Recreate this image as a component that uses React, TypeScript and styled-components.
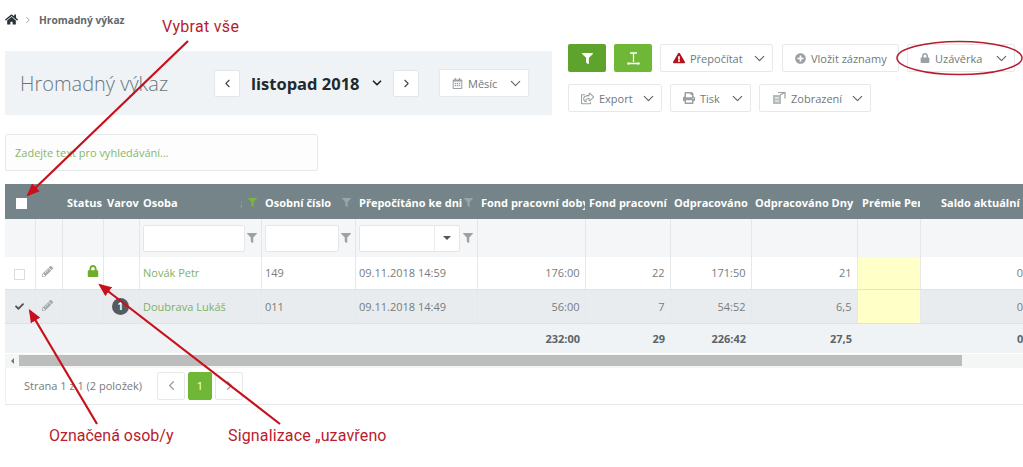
import React from "react";
import styled, { createGlobalStyle } from "styled-components";
import { ChevronDown, ChevronLeft, ChevronRight } from "lucide-react";
import {
  FaCheck,
  FaExclamationTriangle,
  FaFilter,
  FaHome,
  FaLock,
  FaPencilAlt,
  FaPlusCircle,
  FaPrint,
  FaRegCalendarAlt,
  FaRegShareSquare,
} from "react-icons/fa";

const GlobalStyle = createGlobalStyle`
  html, body {
    margin: 0;
    padding: 0;
    background: #fff;
    overflow: hidden;
  }
  body {
    font-family: "Open Sans", "Liberation Sans", sans-serif;
    color: #6b7478;
  }
`;

const Page = styled.div`
  position: relative;
  width: 1023px;
  height: 467px;
  overflow: hidden;
`;

const Top = styled.div`
  display: flex;
  padding-left: 5px;
  height: 184px;
`;

const LeftColumn = styled.div`
  width: 547px;
  margin-right: 16px;
`;

const Breadcrumb = styled.div`
  height: 51px;
  padding-top: 13px;
  box-sizing: border-box;
  display: flex;
  align-items: flex-start;
  font-size: 10.2px;
  line-height: 14px;
  font-weight: 700;
  color: #5f686c;
  svg.home {
    color: #2b3338;
    width: 13px;
    height: 13px;
  }
  svg.sep {
    margin: 2px 6px 0 5px;
    color: #8f979b;
  }
`;

const TitlePanel = styled.div`
  height: 64px;
  background: #eff3f6;
  display: flex;
  align-items: center;
  padding-left: 15px;
`;

const Title = styled.div`
  width: 194px;
  font-size: 20px;
  font-weight: 300;
  color: #69767c;
  white-space: nowrap;
`;

const SquareButton = styled.div`
  width: 26px;
  height: 27px;
  background: #fff;
  border: 1px solid #e3e6e8;
  border-radius: 2px;
  box-sizing: border-box;
  display: flex;
  align-items: center;
  justify-content: center;
  color: #3d4448;
`;

const Period = styled.div`
  width: 153px;
  padding-left: 11px;
  box-sizing: border-box;
  display: flex;
  align-items: center;
  font-size: 16.5px;
  font-weight: 700;
  color: #22292d;
  white-space: nowrap;
  svg {
    margin-left: 10px;
    color: #22292d;
  }
`;

const ToolButton = styled.div<{ $w: number }>`
  width: ${(p) => p.$w}px;
  height: 28px;
  box-sizing: border-box;
  background: #fff;
  border: 1px solid #e6e8ea;
  border-radius: 2px;
  padding: 0 4px 0 12px;
  display: flex;
  align-items: center;
  gap: 5px;
  font-size: 11px;
  color: #70787c;
  white-space: nowrap;
  > svg:first-child {
    color: #9aa0a4;
    flex: none;
  }
  > svg:last-child:not(:first-child) {
    margin-left: auto;
    color: #5c6468;
    flex: none;
  }
`;

const MonthButton = styled(ToolButton)`
  margin-left: 20px;
`;

const WideToolButton = styled(ToolButton)`
  margin-left: 1px;
`;

const WarnIcon = styled(FaExclamationTriangle)`
  &&& {
    color: #b3141c;
  }
`;

const SearchBox = styled.div`
  margin-top: 19px;
  width: 313px;
  height: 37px;
  box-sizing: border-box;
  border: 1px solid #e6e9eb;
  border-radius: 2px;
  padding: 0 9px;
  display: flex;
  align-items: center;
  font-size: 11px;
  color: #86b768;
  background: #fdfdfd;
`;

const RightColumn = styled.div`
  padding-top: 44px;
  display: flex;
  flex-direction: column;
  gap: 12px;
`;

const ButtonRow = styled.div`
  display: flex;
  gap: 8px;
`;

const GreenButton = styled.div<{ $dark?: boolean }>`
  width: 38px;
  height: 28px;
  border-radius: 2px;
  background: ${(p) => (p.$dark ? "#5ea32c" : "#6fb737")};
  display: flex;
  align-items: center;
  justify-content: center;
  color: #fff;
`;

const TableWrap = styled.div`
  margin-left: 5px;
  width: 1018px;
  overflow: hidden;
`;

const Grid = styled.table`
  table-layout: fixed;
  border-collapse: collapse;
  width: 1039px;
  font-size: 11px;
`;

const Col = styled.col<{ $w: number }>`
  width: ${(p) => p.$w}px;
`;

const HeadCell = styled.th<{ $left?: number }>`
  height: 35px;
  padding: 1px 0 0 ${(p) => p.$left ?? 4}px;
  box-sizing: border-box;
  background: #748489;
  color: #fff;
  font-size: 11px;
  font-weight: 700;
  text-align: left;
  white-space: nowrap;
  overflow: hidden;
`;

const HeadInner = styled.div`
  display: flex;
  align-items: center;
  justify-content: space-between;
  padding-right: 4px;
  svg {
    flex: none;
  }
`;

const SortIcons = styled.span`
  display: flex;
  align-items: center;
  gap: 4px;
  color: #9aa5a9;
  font-weight: 400;
`;

const ActiveFilter = styled(FaFilter)`
  color: #7cb342;
`;

const FilterCell = styled.td`
  height: 38px;
  padding: 0 4px 0 3px;
  background: #f4f6f7;
  border-right: 1px solid #e4e7e9;
`;

const FilterInner = styled.div`
  display: flex;
  align-items: center;
  justify-content: space-between;
  color: #9aa3a6;
`;

const FilterInput = styled.div<{ $w: number }>`
  width: ${(p) => p.$w}px;
  height: 27px;
  background: #fff;
  border: 1px solid #e4e7e9;
  border-radius: 2px;
  box-sizing: border-box;
  display: flex;
  justify-content: flex-end;
  align-items: center;
`;

const DropPart = styled.span`
  width: 24px;
  height: 100%;
  border-left: 1px solid #e9ebed;
  display: flex;
  align-items: center;
  justify-content: center;
  &::after {
    content: "";
    border: 4px solid transparent;
    border-top-color: #555;
    border-bottom: 0;
  }
`;

const Row = styled.tr<{ $selected?: boolean }>`
  td {
    background: ${(p) => (p.$selected ? "#e9ecee" : "#fff")};
    border-bottom: 1px solid ${(p) => (p.$selected ? "#e0e3e5" : "#dfe2e4")};
  }
`;

const Cell = styled.td<{ $right?: boolean; $center?: boolean; $h?: number }>`
  height: ${(p) => p.$h ?? 32}px;
  padding: 0 5px 0 3.5px;
  box-sizing: border-box;
  border-right: 1px solid #e6e8ea;
  color: #757d80;
  font-size: 11px;
  white-space: nowrap;
  text-align: ${(p) => (p.$right ? "right" : p.$center ? "center" : "left")};
`;

const NameCell = styled(Cell)`
  color: #7fb163;
`;

const YellowCell = styled(Cell)`
  && {
    background: #ffffc8;
  }
`;

const StatusCell = styled(Cell)`
  padding-right: 4px;
  text-align: right;
`;

const Total = styled.td<{ $right?: boolean }>`
  height: 29px;
  padding: 0 5px 0 4px;
  background: #f0f3f6;
  font-weight: 700;
  color: #5c6468;
  text-align: ${(p) => (p.$right ? "right" : "left")};
`;

const CheckBox = styled.span<{ $header?: boolean }>`
  display: inline-flex;
  width: 11px;
  height: 11px;
  box-sizing: border-box;
  vertical-align: middle;
  background: ${(p) => (p.$header ? "#fff" : "transparent")};
  border: 1px solid ${(p) => (p.$header ? "#fff" : "#dadddf")};
`;

const PlainCheck = styled.span`
  color: #4a5155;
  display: inline-flex;
`;

const Pencil = styled(FaPencilAlt)`
  color: #a4a9ac;
`;

const Badge = styled.span`
  display: inline-flex;
  width: 17px;
  height: 17px;
  border-radius: 50%;
  background: #545c60;
  color: #fff;
  font-size: 10px;
  font-weight: 700;
  align-items: center;
  justify-content: center;
`;

const Scrollbar = styled.div`
  margin: 1px 0 0 5px;
  height: 14px;
  display: flex;
  align-items: center;
  background: #f4f5f5;
`;

const ScrollArrow = styled.span`
  width: 14px;
  display: flex;
  justify-content: center;
  &::after {
    content: "";
    border: 3px solid transparent;
    border-right-color: #777;
    border-left: 0;
  }
`;

const ScrollThumb = styled.span`
  width: 943px;
  height: 11px;
  background: #bdbdbd;
`;

const Pager = styled.div`
  margin-left: 5px;
  height: 37px;
  box-sizing: border-box;
  border-bottom: 1px solid #e6e8ea;
  border-left: 1px solid #eef0f1;
  display: flex;
  align-items: center;
  padding-left: 18px;
  font-size: 11px;
  color: #747c80;
`;

const PagerText = styled.span`
  width: 133px;
  white-space: nowrap;
`;

const PageButton = styled.span<{ $active?: boolean; $w: number }>`
  width: ${(p) => p.$w}px;
  height: 28px;
  margin-right: 3px;
  box-sizing: border-box;
  display: flex;
  align-items: center;
  justify-content: center;
  border-radius: 2px;
  font-size: 11px;
  background: ${(p) => (p.$active ? "#6fb737" : "#fff")};
  color: ${(p) => (p.$active ? "#fff" : "#9aa0a4")};
  border: 1px solid ${(p) => (p.$active ? "#6fb737" : "#e6e8ea")};
`;

const Overlay = styled.svg`
  position: absolute;
  left: 0;
  top: 0;
  pointer-events: none;
`;

const Note = styled.div<{ $x: number; $y: number; $spacing?: number }>`
  position: absolute;
  left: ${(p) => p.$x}px;
  top: ${(p) => p.$y}px;
  font-family: Roboto, "Liberation Sans", sans-serif;
  font-size: 16px;
  line-height: 20px;
  letter-spacing: ${(p) => p.$spacing ?? 0}px;
  color: #b81c2e;
  white-space: nowrap;
`;

const TextWidthIcon = () => (
  <svg width="15" height="15" viewBox="0 0 15 15" fill="none" stroke="currentColor">
    <path d="M4 2h7M7.5 2v9M2.5 12.5h10" strokeWidth="1.3" />
    <circle cx="2.5" cy="12.5" r="1.2" fill="currentColor" stroke="none" />
    <circle cx="12.5" cy="12.5" r="1.2" fill="currentColor" stroke="none" />
  </svg>
);

const ViewIcon = () => (
  <svg width="14" height="14" viewBox="0 0 14 14" fill="none" stroke="currentColor" strokeWidth="1.2">
    <rect x="1" y="4" width="8" height="9" fill="#b5babd" stroke="none" />
    <path d="M6 1.5h7v6M8 4l5-2.5" />
    <path d="M3 7h4M3 10h4" stroke="#fff" />
  </svg>
);

const Chevron = () => <ChevronDown size={17} strokeWidth={1.6} />;

const widths = [30, 27, 41, 36, 122, 94, 122, 108, 85, 81, 106, 63, 124];

const rows = [
  { name: "Novák Petr", no: "149", date: "09.11.2018 14:59", fund: "176:00", days: "22", worked: "171:50", wdays: "21", selected: false },
  { name: "Doubrava Lukáš", no: "011", date: "09.11.2018 14:49", fund: "56:00", days: "7", worked: "54:52", wdays: "6,5", selected: true },
];

function App() {
  return (
    <Page>
      <GlobalStyle />
      <Top>
        <LeftColumn>
          <Breadcrumb>
            <FaHome className="home" />
            <ChevronRight className="sep" size={10} />
            Hromadný výkaz
          </Breadcrumb>
          <TitlePanel>
            <Title>Hromadný výkaz</Title>
            <SquareButton><ChevronLeft size={13} /></SquareButton>
            <Period>listopad 2018 <ChevronDown size={14} strokeWidth={3} /></Period>
            <SquareButton><ChevronRight size={13} /></SquareButton>
            <MonthButton $w={90}>
              <FaRegCalendarAlt size={11} />
              Měsíc
              <Chevron />
            </MonthButton>
          </TitlePanel>
          <SearchBox>Zadejte text pro vyhledávání...</SearchBox>
        </LeftColumn>
        <RightColumn>
          <ButtonRow>
            <GreenButton $dark><FaFilter size={11} /></GreenButton>
            <GreenButton><TextWidthIcon /></GreenButton>
            <ToolButton $w={113}>
              <WarnIcon size={12} />
              Přepočítat
              <Chevron />
            </ToolButton>
            <WideToolButton $w={117}>
              <FaPlusCircle size={11} />
              Vložit záznamy
            </WideToolButton>
            <ToolButton $w={108}>
              <FaLock size={10} />
              Uzávěrka
              <Chevron />
            </ToolButton>
          </ButtonRow>
          <ButtonRow>
            <ToolButton $w={94}>
              <FaRegShareSquare size={13} />
              Export
              <Chevron />
            </ToolButton>
            <ToolButton $w={81}>
              <FaPrint size={12} />
              Tisk
              <Chevron />
            </ToolButton>
            <ToolButton $w={112}>
              <ViewIcon />
              Zobrazení
              <Chevron />
            </ToolButton>
          </ButtonRow>
        </RightColumn>
      </Top>

      <TableWrap>
        <Grid>
          <colgroup>
            {widths.map((w, i) => (
              <Col key={i} $w={w} />
            ))}
          </colgroup>
          <thead>
            <tr>
              <HeadCell $left={11}><CheckBox $header /></HeadCell>
              <HeadCell />
              <HeadCell $left={5}>Status</HeadCell>
              <HeadCell $left={4}>Varov</HeadCell>
              <HeadCell>
                <HeadInner>
                  Osoba
                  <SortIcons>↓ <ActiveFilter size={9} /></SortIcons>
                </HeadInner>
              </HeadCell>
              <HeadCell>
                <HeadInner>Osobní číslo <SortIcons><FaFilter size={9} /></SortIcons></HeadInner>
              </HeadCell>
              <HeadCell>
                <HeadInner>Přepočítáno ke dni <SortIcons><FaFilter size={9} /></SortIcons></HeadInner>
              </HeadCell>
              <HeadCell>Fond pracovní doby</HeadCell>
              <HeadCell>Fond pracovní</HeadCell>
              <HeadCell>Odpracováno</HeadCell>
              <HeadCell>Odpracováno Dny</HeadCell>
              <HeadCell $left={5}>Prémie Per</HeadCell>
              <HeadCell $left={21}>Saldo aktuální</HeadCell>
            </tr>
            <tr>
              <FilterCell />
              <FilterCell />
              <FilterCell />
              <FilterCell />
              <FilterCell>
                <FilterInner><FilterInput $w={102} /><FaFilter size={10} /></FilterInner>
              </FilterCell>
              <FilterCell>
                <FilterInner><FilterInput $w={74} /><FaFilter size={10} /></FilterInner>
              </FilterCell>
              <FilterCell>
                <FilterInner><FilterInput $w={101}><DropPart /></FilterInput><FaFilter size={10} /></FilterInner>
              </FilterCell>
              <FilterCell />
              <FilterCell />
              <FilterCell />
              <FilterCell />
              <FilterCell />
              <FilterCell />
            </tr>
          </thead>
          <tbody>
            {rows.map((r) => (
              <Row key={r.name} $selected={r.selected}>
                <Cell $center $h={r.selected ? 34 : 32}>
                  {r.selected ? <PlainCheck><FaCheck size={9} /></PlainCheck> : <CheckBox />}
                </Cell>
                <Cell $center><Pencil size={11} /></Cell>
                <StatusCell>
                  {!r.selected && <FaLock size={12} color="#6fae2a" />}
                </StatusCell>
                <Cell $center>{r.selected && <Badge>1</Badge>}</Cell>
                <NameCell>{r.name}</NameCell>
                <Cell>{r.no}</Cell>
                <Cell>{r.date}</Cell>
                <Cell $right>{r.fund}</Cell>
                <Cell $right>{r.days}</Cell>
                <Cell $right>{r.worked}</Cell>
                <Cell $right>{r.wdays}</Cell>
                <YellowCell />
                <Cell $right>0:00</Cell>
              </Row>
            ))}
          </tbody>
          <tfoot>
            <tr>
              <Total colSpan={7} />
              <Total $right>232:00</Total>
              <Total $right>29</Total>
              <Total $right>226:42</Total>
              <Total $right>27,5</Total>
              <Total />
              <Total $right>0:00</Total>
            </tr>
          </tfoot>
        </Grid>
      </TableWrap>

      <Scrollbar>
        <ScrollArrow />
        <ScrollThumb />
      </Scrollbar>

      <Pager>
        <PagerText>Strana 1 z 1 (2 položek)</PagerText>
        <PageButton $w={28}><ChevronLeft size={15} /></PageButton>
        <PageButton $w={24} $active>1</PageButton>
        <PageButton $w={28}><ChevronRight size={15} /></PageButton>
      </Pager>

      <Overlay width="1023" height="467" viewBox="0 0 1023 467">
        <defs>
          <marker id="head" markerWidth="6" markerHeight="5" refX="5" refY="2.5" orient="auto">
            <path d="M0 0L6 2.5L0 5z" fill="#c8101c" />
          </marker>
        </defs>
        <g stroke="#c8101c" strokeWidth="2.2" fill="none">
          <path d="M188 41L28 195" markerEnd="url(#head)" />
          <path d="M97 424L30 311" markerEnd="url(#head)" />
          <path d="M280 424L100 285" markerEnd="url(#head)" />
        </g>
        <ellipse cx="959.5" cy="58" rx="62.5" ry="16.5" fill="none" stroke="#b81c2e" strokeWidth="1.5" />
      </Overlay>
      <Note $x={162} $y={17} $spacing={0.3}>Vybrat vše</Note>
      <Note $x={49} $y={426}>Označená osob/y</Note>
      <Note $x={228} $y={426} $spacing={0.15}>Signalizace „uzavřeno</Note>
    </Page>
  );
}

export default App;
